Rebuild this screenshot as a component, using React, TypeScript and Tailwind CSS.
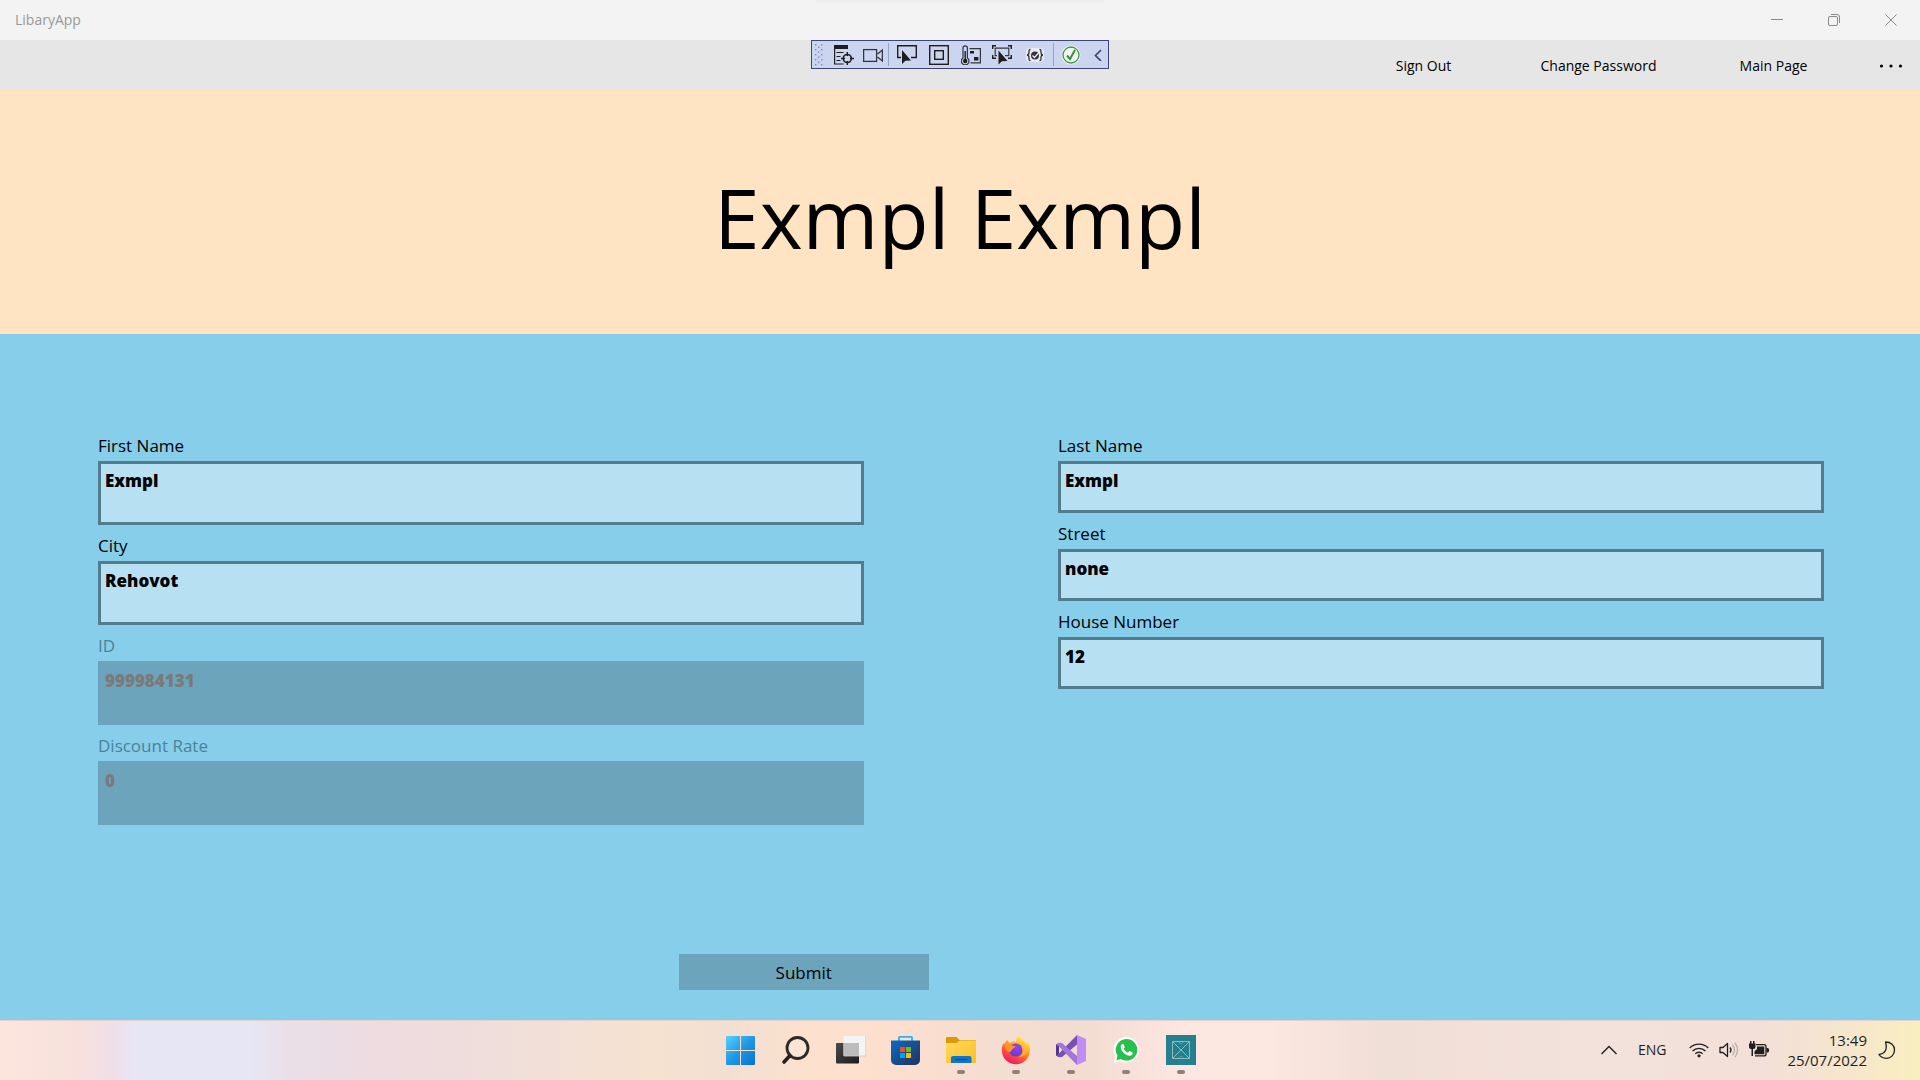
import React from "react";

type IconProps = { children: React.ReactNode; size?: string; box?: string };

function Icon({ children, size = "size-5", box = "0 0 20 20" }: IconProps) {
  return (
    <svg viewBox={box} className={`${size} shrink-0`} fill="none" aria-hidden="true">
      {children}
    </svg>
  );
}

function TitleBar() {
  return (
    <header className="relative flex h-10 items-center justify-between bg-[#f3f3f3] pr-px pl-[15px]">
      <span className="text-sm text-[#999999]">LibaryApp</span>
      <div className="absolute top-0 left-1/2 h-1 w-[290px] -translate-x-1/2 rounded-b-lg bg-linear-to-b from-[#ededed] to-[#f3f3f3]" />
      <div className="flex h-full text-[#8a8a8a]">
        <button aria-label="Minimize" className="flex w-[57px] items-center justify-center">
          <Icon size="size-3" box="0 0 12 12">
            <path d="M0 5.5h12" stroke="currentColor" />
          </Icon>
        </button>
        <button aria-label="Restore" className="flex w-[57px] items-center justify-center">
          <Icon size="size-3" box="0 0 12 12">
            <rect x="0.5" y="2.5" width="9" height="9" rx="1.5" stroke="currentColor" />
            <path d="M3 0.5h6a2.5 2.5 0 0 1 2.5 2.5v6" stroke="currentColor" />
          </Icon>
        </button>
        <button aria-label="Close" className="flex w-[57px] items-center justify-center">
          <Icon size="size-3" box="0 0 12 12">
            <path d="M0.5 0.5l11 11M11.5 0.5l-11 11" stroke="currentColor" />
          </Icon>
        </button>
      </div>
    </header>
  );
}

const pointer = "M0 0L0 14L3.4 10.8L9 10.4Z";

function DebugToolbar() {
  return (
    <div className="absolute top-0 left-1/2 flex h-[29px] w-[298px] -translate-x-1/2 items-stretch border border-[#3b4578] bg-[#ccd5f0]">
      <div className="flex w-[17px] items-center pl-[3px]">
        <svg viewBox="0 0 8 22" className="h-[22px] w-2" aria-hidden="true">
          <g fill="#7d8bb5">
            {[0, 5, 10, 15, 20].map((y) => (
              <React.Fragment key={y}>
                <rect x="0" y={y} width="1.4" height="1.4" />
                <rect x="6" y={y} width="1.4" height="1.4" />
              </React.Fragment>
            ))}
            {[2.5, 7.5, 12.5, 17.5].map((y) => (
              <rect key={y} x="3" y={y} width="1.4" height="1.4" />
            ))}
          </g>
        </svg>
      </div>
      <button aria-label="Go to Live Visual Tree" className="flex w-[29px] items-center justify-center">
        <Icon>
          <path d="M0 0h14v4H0z" fill="#1e1e1e" />
          <path d="M0.6 4v15h9M2.5 7.5h7M2.5 11.5h4M2.5 15.5h4" stroke="#1e1e1e" strokeWidth="1.2" />
          <circle cx="13.3" cy="13.5" r="4" stroke="#1e1e1e" strokeWidth="1.6" />
          <path d="M13.3 7v4M13.3 16v4M7 13.5h4M16 13.5h4" stroke="#1e1e1e" strokeWidth="1.4" />
        </Icon>
      </button>
      <button aria-label="Show in XAML Live Preview" className="flex w-[29px] items-center justify-center">
        <Icon>
          <rect x="0.6" y="4.6" width="13" height="11.8" stroke="#33353f" strokeWidth="1.3" />
          <path d="M14.5 9l4.9-4v11l-4.9-4" stroke="#33353f" strokeWidth="1.3" />
        </Icon>
      </button>
      <div className="my-0.5 mr-0.5 ml-px w-px bg-[#90a3cf]" />
      <button aria-label="Select Element" className="flex w-8 items-center justify-center">
        <Icon>
          <path d="M4 12.5H0.7V0.7h18.6v11.8H14" stroke="#1e1e1e" strokeWidth="1.4" />
          <path d={pointer} transform="translate(5 5)" fill="#1e1e1e" />
        </Icon>
      </button>
      <button aria-label="Display Layout Adorners" className="flex w-8 items-center justify-center">
        <Icon>
          <rect x="0.7" y="0.7" width="18.6" height="18.6" stroke="#1e1e1e" strokeWidth="1.4" />
          <rect x="5.7" y="5.7" width="8.6" height="8.6" stroke="#1e1e1e" strokeWidth="1.4" />
        </Icon>
      </button>
      <button aria-label="Track Focused Element" className="flex w-8 items-center justify-center">
        <Icon>
          <path d="M2 13V3a2 2 0 0 1 4.4 0v10a3.8 3.8 0 1 1-4.4 0z" stroke="#33353f" strokeWidth="1.2" />
          <circle cx="4.2" cy="16" r="2.2" fill="#1e1e1e" />
          <path d="M4.2 6v9" stroke="#1e1e1e" strokeWidth="1.4" />
          <path d="M8.5 3.6h10.9v14.2H9.5" stroke="#33353f" strokeWidth="1.2" />
          <path d="M9 6h4v2.4H9zM13 12h4.4v3.6H13z" fill="#1e1e1e" />
        </Icon>
      </button>
      <button aria-label="Scan Accessibility" className="flex w-[30px] items-center justify-center">
        <Icon>
          <path d="M0.7 4V0.7H4M16 0.7h3.3V4M0.7 10v3.3H4M19.3 10v3.3H16" stroke="#1e1e1e" strokeWidth="1.4" />
          <path d="M5 10.7H3.2V3.2h13.6v7.5H13" stroke="#33353f" strokeWidth="1.2" />
          <path d={pointer} transform="translate(6.5 5.5)" fill="#1e1e1e" />
        </Icon>
      </button>
      <button aria-label="Binding Failures" className="flex w-9 items-center justify-center">
        <Icon size="size-[18px]" box="0 0 18 18">
          <rect x="0" y="2" width="18" height="14" rx="4" fill="#e8ebf4" />
          <path
            d="M4.500 3.500C2.800 3.500 3 4.500 3 6.300S2.400 9 1 9c1.400 0 2 .9 2 2.700S2.800 14.500 4.500 14.500M13.500 3.500c1.700 0 1.500 1 1.500 2.800S15.600 9 17 9c-1.400 0-2 .9-2 2.700s.2 2.800-1.500 2.800"
            stroke="#333"
            strokeWidth="1.3"
          />
          <circle cx="9" cy="9.5" r="4" fill="#333" />
          <path d="M6.500 9.500l2 2 4.500-5" stroke="#e8ebf4" strokeWidth="1.3" />
        </Icon>
      </button>
      <div className="my-0.5 w-px bg-[#90a3cf]" />
      <button aria-label="Hot Reload available" className="flex w-[34px] items-center justify-center">
        <Icon>
          <circle cx="10" cy="10" r="9.5" fill="#f2f4f8" />
          <circle cx="10" cy="10" r="8" stroke="#3a9c3a" strokeWidth="1.3" />
          <path d="M6 10.500l3 3.500 5-9" stroke="#2f962f" strokeWidth="2" />
        </Icon>
      </button>
      <button aria-label="Collapse toolbar" className="flex w-5 items-center justify-center">
        <Icon size="size-3" box="0 0 12 12">
          <path d="M9 1L3.500 6.500L9 12" stroke="#3b4578" strokeWidth="1.7" />
        </Icon>
      </button>
    </div>
  );
}

function CommandBar() {
  return (
    <nav className="relative flex h-[50px] justify-end bg-[#e6e6e6] text-sm">
      <DebugToolbar />
      <button className="w-[175px] pt-0.5">Sign Out</button>
      <button className="w-[175px] pt-0.5">Change Password</button>
      <button className="w-[175px] pt-0.5">Main Page</button>
      <button aria-label="More" className="flex w-[59px] items-center justify-center pt-0.5">
        <svg viewBox="0 0 24 4" className="h-1 w-6" aria-hidden="true">
          <circle cx="2.5" cy="2" r="1.6" />
          <circle cx="12" cy="2" r="1.6" />
          <circle cx="21.5" cy="2" r="1.6" />
        </svg>
      </button>
    </nav>
  );
}

type FieldProps = { id: string; label: string; value: string; tall?: boolean; disabled?: boolean };

function Field({ id, label, value, tall, disabled }: FieldProps) {
  return (
    <div className="flex flex-col gap-[3px]">
      <label htmlFor={id} className={`text-[17px] leading-6 ${disabled ? "text-[#4d8299]" : "text-black"}`}>
        {label}
      </label>
      <input
        id={id}
        defaultValue={value}
        disabled={disabled}
        className={`w-full border-[3px] pt-1 pl-1 text-[17px] leading-6 font-extrabold outline-none ${
          tall ? "h-16 pb-[30px]" : "h-[52px] pb-[18px]"
        } ${disabled ? "border-[#6ca4bb] bg-[#6ca4bb] text-[#7a7a7a]" : "border-[#517d8f] bg-[#b7e1f3] text-black"}`}
      />
    </div>
  );
}

function ProfileForm() {
  return (
    <form className="flex flex-1 flex-col bg-[#87ceeb] pt-[100px] pb-[30px]" onSubmit={(e) => e.preventDefault()}>
      <div className="grid grid-cols-2">
        <div className="flex flex-col gap-[9px] pr-24 pl-[98px]">
          <Field id="first" label="First Name" value="Exmpl" tall />
          <Field id="city" label="City" value="Rehovot" tall />
          <Field id="id" label="ID" value="999984131" tall disabled />
          <Field id="discount" label="Discount Rate" value="0" tall disabled />
        </div>
        <div className="flex flex-col gap-[9px] pr-24 pl-[98px]">
          <Field id="last" label="Last Name" value="Exmpl" />
          <Field id="street" label="Street" value="none" />
          <Field id="house" label="House Number" value="12" />
        </div>
      </div>
      <button type="submit" className="mt-auto ml-[35.35%] h-9 w-[250px] bg-[#6ca4bb] pt-0.5 text-[17px]">
        Submit
      </button>
    </form>
  );
}

function StartIcon() {
  return (
    <Icon size="size-[29px]" box="0 0 29 29">
      <defs>
        <linearGradient id="win" x1="0" y1="0" x2="1" y2="1">
          <stop offset="0" stopColor="#55d3fd" />
          <stop offset="0.5" stopColor="#1f98e4" />
          <stop offset="1" stopColor="#0473d0" />
        </linearGradient>
      </defs>
      <path
        d="M1 0h13v14H0V1a1 1 0 0 1 1-1zM15 0h13a1 1 0 0 1 1 1v13H15zM0 15h14v14H1a1 1 0 0 1-1-1zM15 15h14v13a1 1 0 0 1-1 1H15z"
        fill="url(#win)"
      />
    </Icon>
  );
}

function SearchIcon() {
  return (
    <Icon size="size-[29px]" box="0 0 29 29">
      <circle cx="16.5" cy="12" r="10.5" stroke="#2a2a2a" strokeWidth="2.8" fill="#fff" fillOpacity="0.15" />
      <path d="M9 19.500L3 26" stroke="#222" strokeWidth="3.6" strokeLinecap="round" />
    </Icon>
  );
}

function TaskViewIcon() {
  return (
    <Icon size="size-[30px]" box="0 0 30 30">
      <defs>
        <linearGradient id="tvd" x1="0" y1="0" x2="1" y2="1">
          <stop offset="0" stopColor="#4a4a4a" />
          <stop offset="1" stopColor="#1c1c1c" />
        </linearGradient>
      </defs>
      <rect x="0" y="8" width="23" height="20.5" rx="1" fill="url(#tvd)" />
      <rect x="7.5" y="1" width="22.5" height="20" rx="1" fill="#f5f5f5" />
      <rect x="7.5" y="8" width="15.5" height="13" fill="#bcbcbc" />
      <path d="M8 21h22M29.700 1v20" stroke="#d0cccb" strokeWidth="0.8" />
    </Icon>
  );
}

function StoreIcon() {
  return (
    <Icon size="size-[29px]" box="0 0 29 29">
      <defs>
        <linearGradient id="store" x1="0" y1="0" x2="1" y2="1">
          <stop offset="0" stopColor="#0a6dc4" />
          <stop offset="1" stopColor="#23305c" />
        </linearGradient>
      </defs>
      <path d="M8 6V1.800a1 1 0 0 1 1-1h11a1 1 0 0 1 1 1V6" stroke="#1fb8f2" strokeWidth="1.8" />
      <path d="M0 4.500h29V24a5 5 0 0 1-5 5H5a5 5 0 0 1-5-5z" fill="url(#store)" />
      <path d="M9 11h5v5H9z" fill="#f25022" />
      <path d="M15 11h5v5h-5z" fill="#7fba00" />
      <path d="M9 17h5v5H9z" fill="#00a4ef" />
      <path d="M15 17h5v5h-5z" fill="#ffb900" />
    </Icon>
  );
}

function FolderIcon() {
  return (
    <Icon size="size-[30px]" box="0 0 30 30">
      <defs>
        <linearGradient id="fold" x1="0" y1="0" x2="1" y2="1">
          <stop offset="0" stopColor="#ffd965" />
          <stop offset="1" stopColor="#fdbf1f" />
        </linearGradient>
      </defs>
      <path d="M0 3a1 1 0 0 1 1-1h9.500l3 3H29a1 1 0 0 1 1 1v6H0z" fill="#dc9a06" />
      <path d="M0 8h10.500l3.500-2.500h16V27a1 1 0 0 1-1 1H1a1 1 0 0 1-1-1z" fill="url(#fold)" />
      <path d="M5 28v-5a2 2 0 0 1 2-2h16.500a2 2 0 0 1 2 2v5z" fill="#0f75cb" />
      <path d="M9 24.500h12.500" stroke="#0a4f94" strokeWidth="1.2" />
    </Icon>
  );
}

function FirefoxIcon() {
  return (
    <Icon size="size-[30px]" box="0 0 30 30">
      <defs>
        <linearGradient id="ffx" x1="0.8" y1="0.05" x2="0.3" y2="1">
          <stop offset="0" stopColor="#fff44f" />
          <stop offset="0.35" stopColor="#ffb02a" />
          <stop offset="0.65" stopColor="#ff5634" />
          <stop offset="1" stopColor="#ee1170" />
        </linearGradient>
        <radialGradient id="ffp" cx="0.6" cy="0.3" r="0.8">
          <stop offset="0" stopColor="#a03ee8" />
          <stop offset="1" stopColor="#5a3bd0" />
        </radialGradient>
      </defs>
      <path
        d="M18.500 0.500c-2.500 2-3.500 4-3.300 6.200C12 6 10.200 6.800 8.800 8 7.500 7.500 6.500 6 6.400 4.800 4.800 6 4 7.600 3.800 9.200 3 8.800 3 8 3 7.400 1.400 9.800.8 12.600.9 15.500A14 13.700 0 0 0 28.900 15.500c.2-4-1-7-3-9 .3 1.500.2 2.500-.2 3.300C24.500 5.500 19.500 4.500 18.500.5z"
        fill="url(#ffx)"
      />
      <circle cx="14.8" cy="15" r="6.6" fill="url(#ffp)" />
      <path d="M3.800 9.200C7 8 10 8.500 11 10.500c1.500.2 2.500.3 3.600.6-.2 1.600-2 2.400-3.200 2.900-1 1.300-.6 2.500-3 2.900-2 0-4.600-3-4.600-7.700z" fill="#ff9329" />
      <path d="M15 7c4-.5 7.500 2.500 7.500 7.500 0 3.500-2 6.500-5.500 7.500 6 .5 9.500-4 8.700-10C24 8.500 19 6 15 7z" fill="#ffbd35" fillOpacity="0.7" />
    </Icon>
  );
}

function VisualStudioIcon() {
  return (
    <Icon size="size-[30px]" box="0 0 30 30">
      <path d="M0 9.500L3 8v14l-3-1.500z" fill="#55348a" />
      <path d="M21 0L2 19.500 0 20.300 3 22.300 6 22 21 9.500z" fill="#7850b3" />
      <path d="M0 9.500L3 7.700 6 8 21 21v9L3.500 12z" fill="#a274dc" />
      <path d="M21 0l9 4v22l-9 4z" fill="#c08df5" />
    </Icon>
  );
}

function WhatsAppIcon() {
  return (
    <Icon size="size-[28px]" box="0 0 28 28">
      <path d="M14.500 1a12.800 12.800 0 0 1 0 25.600c-2.200 0-4.200-.5-6-1.500L1.500 27l2-6.500A12.800 12.800 0 0 1 14.500 1z" fill="#fff" />
      <path d="M14.500 3a10.800 10.800 0 0 1 0 21.600c-2 0-4-.6-5.600-1.600L4.300 24.200l1.300-4.400A10.800 10.800 0 0 1 14.500 3z" fill="#27c04b" />
      <path
        d="M10.600 8c-.5 0-1.900 1-1.900 3 0 4.500 5.500 8.700 9 8.700 1.700 0 3-1.200 3.100-2.800 0-.5-2.900-2.100-3.400-2-.6.200-1.200 1.700-1.700 1.600-1.200-.3-3.600-2.300-4-3.700-.1-.5 1.100-1.100 1.100-1.700 0-.5-1.100-3-1.600-3.100z"
        fill="#fff"
      />
    </Icon>
  );
}

function LibraryIcon() {
  return (
    <Icon size="size-[30px]" box="0 0 30 30">
      <path d="M0 0h30v30H0z" fill="#24808f" />
      <path d="M6.500 6.500h17v17h-17zM6.500 6.500l17 17M23.500 6.500l-17 17" stroke="#8fb9bf" />
      <path d="M12 6.500h6L15 9zM12 23.500h6L15 21z" stroke="#8fb9bf" strokeWidth="0.5" />
    </Icon>
  );
}

const apps = [
  { name: "Start", icon: <StartIcon />, running: false },
  { name: "Search", icon: <SearchIcon />, running: false },
  { name: "Task View", icon: <TaskViewIcon />, running: false },
  { name: "Microsoft Store", icon: <StoreIcon />, running: false },
  { name: "File Explorer", icon: <FolderIcon />, running: true },
  { name: "Firefox", icon: <FirefoxIcon />, running: true },
  { name: "Visual Studio", icon: <VisualStudioIcon />, running: true },
  { name: "WhatsApp", icon: <WhatsAppIcon />, running: true },
  { name: "LibaryApp", icon: <LibraryIcon />, running: true },
];

function Taskbar() {
  return (
    <footer className="grid h-[60px] grid-cols-[1fr_auto_1fr] border-t border-[#e6d3cb] bg-[linear-gradient(90deg,#fbe5dd_0%,#f8e1dc_4%,#f0dfea_6%,#e7e6f5_7%,#e7e6f5_13%,#eadfe8_15%,#eedbe0_20%,#f0dedb_26%,#f5e2d0_34%,#f3dfd2_38%,#fce1cd_42%,#fddfce_46%,#f4ddd1_52%,#f3ddd3_57%,#fde7e2_62%,#fce7e1_66%,#f0dfd6_72%,#f3e1dc_83%,#f2e0d8_92%,#f5e6cd_96%,#f9eec0_100%)] pb-px text-[#1f1f1f]">
      <div />
      <div className="flex pl-px">
        {apps.map((app) => (
          <button key={app.name} aria-label={app.name} className="relative flex w-[55px] items-center justify-center">
            {app.icon}
            {app.running && <span className="absolute bottom-[5px] h-1 w-2 rounded-full bg-[#8c817c]" />}
          </button>
        ))}
      </div>
      <div className="flex items-center justify-end pr-6 pb-px">
        <button aria-label="Show hidden icons" className="mr-[21px]">
          <Icon size="size-4" box="0 0 16 16">
            <path d="M0.500 12L8 4.500l7.500 7.500" stroke="currentColor" strokeWidth="1.4" />
          </Icon>
        </button>
        <button className="mr-[23px] text-sm">ENG</button>
        <button aria-label="Network, volume and battery" className="mr-[18px] flex gap-2.5">
          <Icon>
            <path d="M0.700 8a13.200 13.200 0 0 1 18.600 0M3.500 11a9.200 9.200 0 0 1 13 0M6.300 13.800a5.200 5.200 0 0 1 7.400 0" stroke="currentColor" strokeWidth="1.3" />
            <circle cx="10" cy="15.8" r="1.6" fill="currentColor" />
          </Icon>
          <Icon>
            <path d="M1 7.500h3L8.500 3.500v13L4 12.500H1z" stroke="currentColor" strokeWidth="1.3" strokeLinejoin="round" />
            <path d="M11 7.500a4 4 0 0 1 0 5" stroke="currentColor" strokeWidth="1.3" />
            <path d="M13.500 5a7.500 7.500 0 0 1 0 10M16 3a11 11 0 0 1 0 14" stroke="#b5aaa6" strokeWidth="1.2" />
          </Icon>
          <Icon>
            <path d="M7 4.700h8a2 2 0 0 1 2 2v7.200a2 2 0 0 1-2 2H6" stroke="currentColor" strokeWidth="1.3" />
            <path d="M8 6.500h7.300v7.700H5.500v-3L8 9z" fill="currentColor" />
            <path d="M17.500 8h1.500l1 1v2.500l-1 1h-1.500z" fill="currentColor" />
            <path d="M0 3.500h1V1h1.500v2.500h1.500V1h1.500v2.500h1V7a2 2 0 0 1-2 2H4v7H2.500V9H2a2 2 0 0 1-2-2z" fill="currentColor" />
          </Icon>
        </button>
        <button className="mr-[11px] flex flex-col items-end text-[15px] leading-5">
          <span>13:49</span>
          <span>25/07/2022</span>
        </button>
        <button aria-label="Focus assist">
          <Icon size="size-[18px]" box="0 0 18 18">
            <path d="M7.500 1C13 1 16.500 4.500 16.500 9S13 17.300 8.500 17.300C5 17.300 2.500 16 1 13.500 5 13 7.800 10.500 8.200 7 8.400 4.500 8 2.500 7.500 1z" stroke="currentColor" strokeWidth="1.3" strokeLinejoin="round" />
          </Icon>
        </button>
      </div>
    </footer>
  );
}

export default function App() {
  return (
    <div className="flex min-h-screen flex-col font-['Open_Sans','Noto_Sans',sans-serif] text-black">
      <TitleBar />
      <CommandBar />
      <main className="flex flex-1 flex-col">
        <section className="flex justify-center bg-[#ffe4c4] pt-[67px] pb-[57px]">
          <h1 className="text-[82px] leading-[120px]">Exmpl Exmpl</h1>
        </section>
        <ProfileForm />
      </main>
      <Taskbar />
    </div>
  );
}
